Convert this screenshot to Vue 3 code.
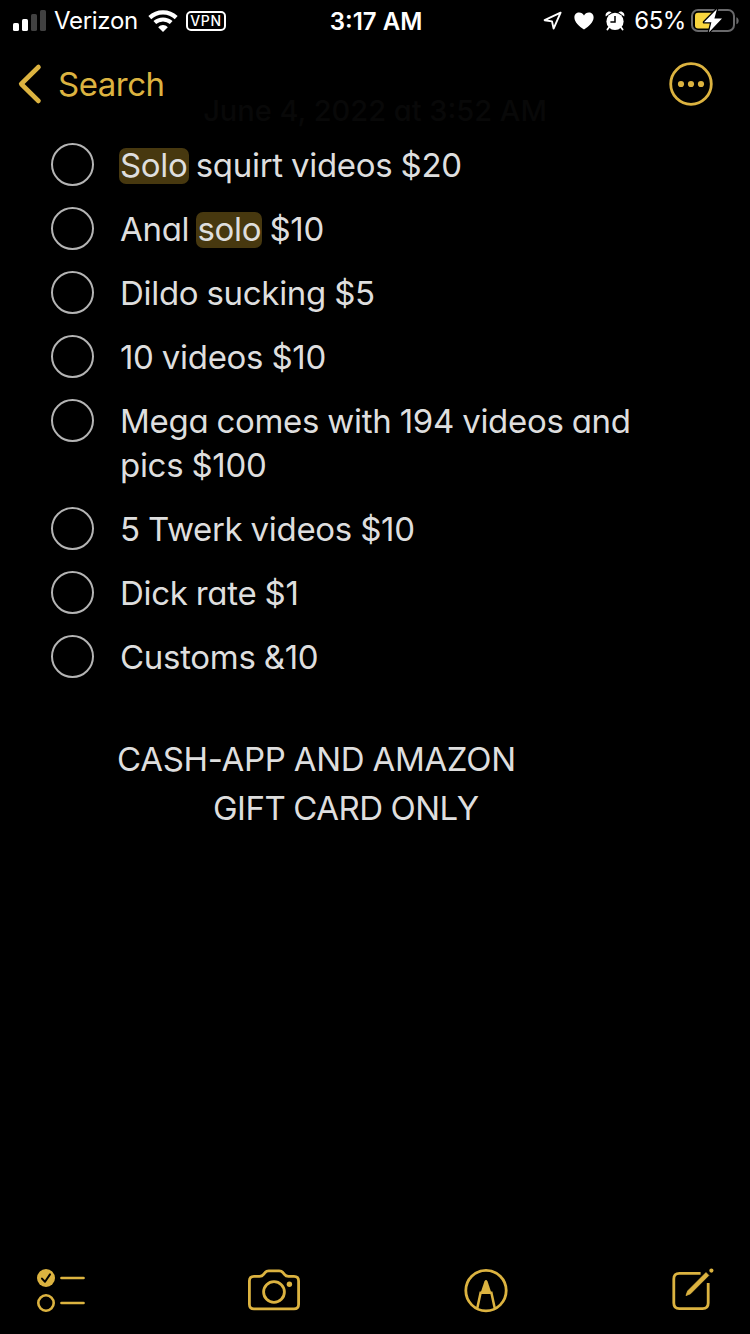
<template>
  <div class="notes-page">
    <!-- status bar -->
    <header class="status-bar">
      <div class="status-left">
        <svg class="signal" width="34" height="22" viewBox="0 0 34 22">
          <rect x="0" y="13" width="6" height="8" rx="1.6" fill="#fff" />
          <rect x="9" y="9" width="6" height="12" rx="1.6" fill="#fff" />
          <rect x="18" y="4" width="6" height="17" rx="1.6" fill="#414141" />
          <rect x="27" y="0" width="6" height="21" rx="1.6" fill="#414141" />
        </svg>
        <span class="carrier">Verizon</span>
        <svg class="wifi" width="30" height="22" viewBox="0 0 30 22">
          <path d="M1.8 7.6 C9.2 0.6 20.8 0.6 28.2 7.6" fill="none" stroke="#fff" stroke-width="4.2" />
          <path d="M6.8 12.6 C11.5 8.3 18.5 8.3 23.2 12.6" fill="none" stroke="#fff" stroke-width="4" />
          <path d="M10.2 17.2 C13 14.4 17 14.4 19.8 17.2 L15 22 Z" fill="#fff" />
        </svg>
        <span class="vpn">VPN</span>
      </div>
      <span class="time">3:17 AM</span>
      <div class="status-right">
        <svg width="20" height="20" viewBox="0 0 20 20">
          <path d="M17.6 1.6 L1.6 9.2 L9 10.4 L10.6 17.6 Z" fill="none" stroke="#fff" stroke-width="1.9" stroke-linejoin="round" />
        </svg>
        <svg class="heart" width="20" height="18" viewBox="0 0 20 18">
          <path d="M10 17.6 C5 14 0.4 10 0.4 5.4 C0.4 2.4 2.5 0.5 5.1 0.5 C7.3 0.5 9 1.7 10 3.5 C11 1.7 12.7 0.5 14.9 0.5 C17.5 0.5 19.6 2.4 19.6 5.4 C19.6 10 15 14 10 17.6 Z" fill="#fff" />
        </svg>
        <svg class="alarm" width="20" height="20" viewBox="0 0 20 20">
          <path d="M4.2 16 L2.4 18.6 M15.8 16 L17.6 18.6" stroke="#fff" stroke-width="1.8" stroke-linecap="round" />
          <path d="M0.8 5.4 C-0.4 2 3.6 -1 6.6 1.2 Z M19.2 5.4 C20.4 2 16.4 -1 13.4 1.2 Z" fill="#fff" />
          <circle cx="10" cy="10.4" r="8.6" fill="#fff" />
          <path d="M10 5 V11 H5.4" fill="none" stroke="#000" stroke-width="1.5" />
        </svg>
        <span class="percent">65%</span>
        <svg class="battery" width="48" height="26" viewBox="0 0 48 26">
          <rect x="1" y="2" width="42" height="21" rx="6" fill="none" stroke="#69696b" stroke-width="2" />
          <path d="M45.4 9.2 C48.4 10.2 48.4 15.2 45.4 16.2 Z" fill="#69696b" />
          <path d="M7 4.8 H22 V20.4 H7 Q4 20.4 4 17.4 V7.8 Q4 4.8 7 4.8 Z" fill="#f9d53e" />
          <path d="M26 1 L13 14.2 H20.4 L18 24.2 L31 10.6 H23.4 Z" fill="#fff" stroke="#000" stroke-width="2.6" paint-order="stroke" stroke-linejoin="round" />
        </svg>
      </div>
    </header>

    <!-- navigation -->
    <nav class="nav-bar">
      <button class="back-btn">
        <svg width="24" height="40" viewBox="0 0 24 40">
          <path d="M20.5 3 L3.2 20 L20.5 37" fill="none" stroke="#dcb340" stroke-width="4.6" stroke-linecap="round" stroke-linejoin="round" />
        </svg>
        <span>Search</span>
      </button>
      <button class="more-btn">
        <svg width="44" height="44" viewBox="0 0 44 44">
          <circle cx="22" cy="22" r="20.3" fill="none" stroke="#dcb340" stroke-width="2.8" />
          <circle v-for="x in [12, 22, 32]" :key="x" :cx="x" cy="22" r="3.1" fill="#dcb340" />
        </svg>
      </button>
      <span class="note-date">June 4, 2022 at 3:52 AM</span>
    </nav>

    <!-- checklist -->
    <main class="note">
      <ul class="checklist">
        <li v-for="(item, index) in items" :key="index" class="check-row">
          <span class="check-circle"></span>
          <p class="check-text">
            <span v-for="(part, i) in item" :key="i" :class="{ highlight: part.mark }">{{ part.text }}</span>
          </p>
        </li>
      </ul>
      <div class="payment">
        <p class="pay-first">CASH-APP AND AMAZON</p>
        <p class="pay-second">GIFT CARD ONLY</p>
      </div>
    </main>

    <!-- bottom toolbar -->
    <footer class="toolbar">
      <svg width="50" height="46" viewBox="0 0 50 46">
        <circle cx="10" cy="10" r="9" fill="#dcb340" />
        <path d="M6 10.6 L9 13.8 L14 6.4" fill="none" stroke="#000" stroke-width="2" stroke-linecap="round" stroke-linejoin="round" />
        <circle cx="10" cy="35" r="7.7" fill="none" stroke="#dcb340" stroke-width="2.6" />
        <path d="M25.5 10 H47.5 M25.5 35 H47.5" stroke="#dcb340" stroke-width="2.7" stroke-linecap="round" />
      </svg>
      <svg width="54" height="46" viewBox="0 0 54 46">
        <path d="M7 8.4 H12.5 C14.5 8.4 15.5 7.8 16.6 6.4 L18 4.7 C19 3.4 20 2.8 21.8 2.8 H32.2 C34 2.8 35 3.4 36 4.7 L37.4 6.4 C38.5 7.8 39.5 8.4 41.5 8.4 H47 C50 8.4 51.6 10 51.6 13 V36.2 C51.6 39.2 50 40.8 47 40.8 H7 C4 40.8 2.4 39.2 2.4 36.2 V13 C2.4 10 4 8.4 7 8.4 Z" fill="none" stroke="#dcb340" stroke-width="2.8" />
        <circle cx="27" cy="24" r="10.4" fill="none" stroke="#dcb340" stroke-width="2.8" />
        <circle cx="42.4" cy="16.2" r="2.7" fill="#dcb340" />
      </svg>
      <svg width="46" height="46" viewBox="0 0 46 46">
        <circle cx="23" cy="22.6" r="20.2" fill="none" stroke="#dcb340" stroke-width="2.8" />
        <path d="M14.2 40.5 L17.6 24.8 H28.4 L31.8 40.5" fill="none" stroke="#dcb340" stroke-width="2.5" />
        <path d="M17.2 26 L21.4 13.4 Q23 10.6 24.6 13.4 L28.8 26 Z" fill="#dcb340" />
      </svg>
      <svg width="46" height="46" viewBox="0 0 46 46">
        <path d="M30.6 5.4 H9.4 C5.6 5.4 3.8 7.2 3.8 11 V35 C3.8 38.8 5.6 40.6 9.4 40.6 H32.6 C36.4 40.6 38.2 38.8 38.2 35 V15" fill="none" stroke="#dcb340" stroke-width="2.8" />
        <path d="M36 4.6 L38.8 7.4 L20.5 25.8 L16 27.6 L17.6 23 Z" fill="#dcb340" stroke="#dcb340" stroke-width="0.8" stroke-linejoin="round" />
        <circle cx="41.4" cy="2.6" r="2.1" fill="#dcb340" />
      </svg>
    </footer>
  </div>
</template>

<script setup>
const items = [
  [{ text: 'Solo', mark: true }, { text: ' squirt videos $20' }],
  [{ text: 'Anal ' }, { text: 'solo', mark: true }, { text: ' $10' }],
  [{ text: 'Dildo sucking $5' }],
  [{ text: '10 videos $10' }],
  [{ text: 'Mega comes with 194 videos and pics $100' }],
  [{ text: '5 Twerk videos $10' }],
  [{ text: 'Dick rate $1' }],
  [{ text: 'Customs &10' }]
]
</script>

<style>
html,
body {
  background: #000;
}
</style>

<style scoped>
.notes-page {
  display: flex;
  flex-direction: column;
  width: 750px;
  height: 1334px;
  overflow: hidden;
  background: #000;
  color: #dedede;
  font-family: Inter, "Liberation Sans", sans-serif;
}

p,
ul {
  margin: 0;
  padding: 0;
}

svg {
  display: block;
  flex: none;
  overflow: visible;
}

/* status bar */
.status-bar {
  display: grid;
  grid-template-columns: 1fr auto 1fr;
  align-items: center;
  height: 40px;
  padding: 0 11px 0 13px;
  color: #fff;
  font-size: 24px;
  line-height: 42px;
}

.status-left,
.status-right {
  display: flex;
  align-items: center;
  height: 40px;
}

.status-right {
  justify-content: flex-end;
}

.signal {
  margin-top: -1px;
}

.carrier {
  margin-left: 7px;
  letter-spacing: -0.3px;
}

.wifi {
  margin-left: 10px;
}

.vpn {
  box-sizing: border-box;
  width: 40px;
  height: 20px;
  margin-left: 8px;
  border: 2px solid #fff;
  border-radius: 5px;
  font-size: 14px;
  font-weight: 500;
  line-height: 16px;
  letter-spacing: 0.6px;
  text-align: center;
}

.time {
  padding-top: 2px;
  font-weight: 600;
  line-height: 40px;
}

.heart {
  margin-left: 11px;
}

.alarm {
  margin-left: 11px;
}

.percent {
  margin-left: 9px;
  letter-spacing: -0.4px;
}

.battery {
  margin-left: 5px;
}

/* navigation */
.nav-bar {
  position: relative;
  display: flex;
  align-items: center;
  justify-content: space-between;
  height: 88px;
  padding: 0 37px 0 18px;
}

.back-btn,
.more-btn {
  display: flex;
  align-items: center;
  padding: 0;
  border: none;
  background: none;
  color: #dcb340;
  font: inherit;
}

.back-btn {
  gap: 16px;
  font-size: 33px;
  letter-spacing: -0.5px;
}

.note-date {
  position: absolute;
  top: 54px;
  left: 0;
  width: 100%;
  color: #080808;
  font-size: 29px;
  font-weight: 500;
  line-height: 34px;
  text-align: center;
  font-feature-settings: "cv11" 1;
}

/* note content */
.note {
  flex: 1;
  padding: 15px 80px 0 51px;
  font-size: 33px;
  line-height: 44px;
  letter-spacing: -0.3px;
  word-spacing: -0.8px;
  font-feature-settings: "cv11" 1;
}

.checklist {
  display: flex;
  flex-direction: column;
  gap: 20px;
  list-style: none;
}

.check-row {
  display: flex;
  gap: 26px;
}

.check-circle {
  box-sizing: border-box;
  flex: none;
  width: 43px;
  height: 43px;
  border: 2px solid #b4b4b4;
  border-radius: 50%;
}

.check-text {
  white-space: pre-wrap;
}

.highlight {
  display: inline-block;
  padding: 0 1px 2px;
  margin: 0 -1px;
  border-radius: 7px;
  background: #47380f;
  line-height: 34px;
}

.payment {
  margin-top: 56px;
  line-height: 49px;
}

.pay-first {
  padding-left: 66px;
}

.pay-second {
  padding-left: 162px;
  letter-spacing: -0.5px;
}

/* bottom toolbar */
.toolbar {
  display: flex;
  align-items: center;
  justify-content: space-between;
  height: 86px;
  padding: 2px 34px 0 36px;
}
</style>
